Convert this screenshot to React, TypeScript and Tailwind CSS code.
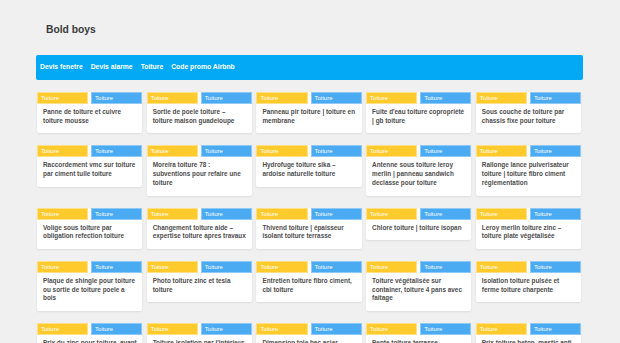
import React from 'react';

const NAV = ['Devis fenetre', 'Devis alarme', 'Toiture', 'Code promo Airbnb'];

const POSTS: string[] = [
  'Panne de toiture et cuivre toiture mousse',
  'Sortie de poele toiture – toiture maison guadeloupe',
  'Panneau pir toiture | toiture en membrane',
  "Fuite d'eau toiture copropriété | gb toiture",
  'Sous couche de toiture par chassis fixe pour toiture',
  'Raccordement vmc sur toiture par ciment tuile toiture',
  'Moreira toiture 78 : subventions pour refaire une toiture',
  'Hydrofuge toiture sika – ardoise naturelle toiture',
  'Antenne sous toiture leroy merlin | panneau sandwich declasse pour toiture',
  'Rallonge lance pulverisateur toiture | toiture fibro ciment réglementation',
  'Volige sous toiture par obligation refection toiture',
  'Changement toiture aide – expertise toiture apres travaux',
  'Thivend toiture | épaisseur isolant toiture terrasse',
  'Chlore toiture | toiture isopan',
  'Leroy merlin toiture zinc – toiture plate végétalisée',
  'Plaque de shingle pour toiture ou sortie de toiture poele a bois',
  'Photo toiture zinc et tesla toiture',
  'Entretien toiture fibro ciment, cbi toiture',
  'Toiture végétalisée sur container, toiture 4 pans avec faitage',
  'Isolation toiture pulsée et ferme toiture charpente',
  'Prix du zinc pour toiture, avant toit toiture',
  "Toiture isolation par l'intérieur",
  'Dimension tole bac acier toiture',
  'Pente toiture terrasse accessible',
  'Prix toiture beton, mastic anti fuite toiture',
];

function Card({ title }: { title: string }) {
  return (
    <div className="bg-white rounded-[2px] shadow-[0_1px_2px_rgba(0,0,0,0.08)]">
      <div className="flex gap-[3px]">
        <span className="flex-1 h-[12px] bg-[#ffca2c] border border-[#ffe08a] text-white text-[6px] leading-[10px] pl-[3px]">Toiture</span>
        <span className="flex-1 h-[12px] bg-[#4aaaf2] border border-[#8fcaf7] text-white text-[6px] leading-[10px] pl-[3px]">Toiture</span>
      </div>
      <p className="pl-[6px] pr-[5px] pt-[4px] pb-[8px] text-[6.4px] leading-[8.7px] font-bold text-[#4d4d4d]">{title}</p>
    </div>
  );
}

export default function App() {
  return (
    <div className="bg-[#f0f0f0] font-['Liberation_Sans',Arial,sans-serif] overflow-hidden h-[343px]">
      <div className="pl-[36px] w-[583px]">
        <h1 className="pl-[10px] pt-[22px] h-[55px] text-[10.3px] font-bold text-[#3a3a3a]">Bold boys</h1>
        <nav className="h-[25px] bg-[#03a9f4] rounded-[2px] flex items-center gap-[8px] px-[4px]">
          {NAV.map((n) => (
            <a key={n} className="text-white text-[6.8px] font-bold">{n}</a>
          ))}
        </nav>
        <div className="grid grid-cols-5 gap-x-[4.5px] gap-y-[12px] items-start pt-[12px] pl-[1px] pr-[2px]">
          {POSTS.map((p) => (
            <Card key={p} title={p} />
          ))}
        </div>
      </div>
    </div>
  );
}
